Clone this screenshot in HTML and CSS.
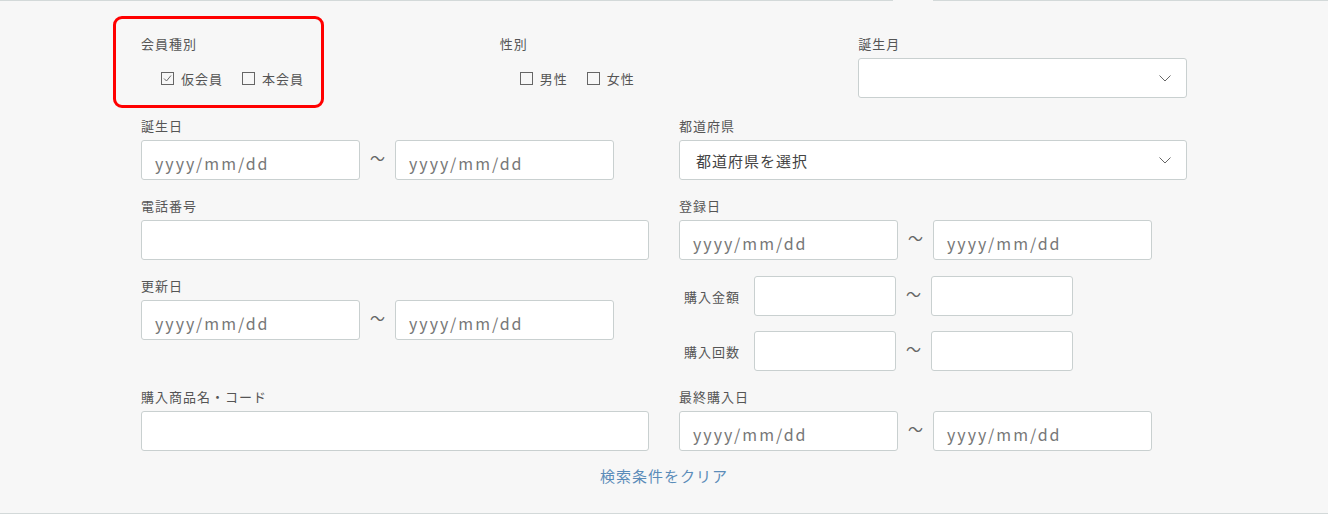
FILE: index.html
```html
<!DOCTYPE html>
<html lang="ja">
<head>
    <meta charset="UTF-8">
    <title>会員検索</title>
    <link rel="stylesheet" href="styles.css">
</head>
<body>
    <div class="panel">
        <span class="tab-notch"></span>
        <div class="search-form">
            <div class="top-row">
                <div class="field highlight">
                    <div class="field-label">会員種別</div>
                    <div class="check-row">
                        <label class="check"><span class="box checked"><svg viewBox="0 0 13 13" width="13" height="13"><path d="M3 6.5 L5.5 9 L10 3.5" fill="none" stroke="#666" stroke-width="1"/></svg></span>仮会員</label>
                        <label class="check"><span class="box"></span>本会員</label>
                    </div>
                    <span class="mark"></span>
                </div>
                <div class="field">
                    <div class="field-label">性別</div>
                    <div class="check-row">
                        <label class="check"><span class="box"></span>男性</label>
                        <label class="check"><span class="box"></span>女性</label>
                    </div>
                </div>
                <div class="field">
                    <div class="field-label">誕生月</div>
                    <div class="select">
                        <span></span>
                        <svg class="chevron" viewBox="0 0 12 7" width="12" height="7"><path d="M0.5 0.5 L6 6 L11.5 0.5" fill="none" stroke="#666" stroke-width="1"/></svg>
                    </div>
                </div>
            </div>

            <div class="main-grid">
                <div class="field">
                    <div class="field-label">誕生日</div>
                    <div class="range">
                        <div class="input date">yyyy/mm/dd</div>
                        <span class="tilde">〜</span>
                        <div class="input date">yyyy/mm/dd</div>
                    </div>
                </div>
                <div class="field">
                    <div class="field-label">都道府県</div>
                    <div class="select">
                        <span>都道府県を選択</span>
                        <svg class="chevron" viewBox="0 0 12 7" width="12" height="7"><path d="M0.5 0.5 L6 6 L11.5 0.5" fill="none" stroke="#666" stroke-width="1"/></svg>
                    </div>
                </div>

                <div class="field">
                    <div class="field-label">電話番号</div>
                    <div class="input"></div>
                </div>
                <div class="field">
                    <div class="field-label">登録日</div>
                    <div class="range">
                        <div class="input date">yyyy/mm/dd</div>
                        <span class="tilde">〜</span>
                        <div class="input date">yyyy/mm/dd</div>
                    </div>
                </div>

                <div class="field">
                    <div class="field-label">更新日</div>
                    <div class="range">
                        <div class="input date">yyyy/mm/dd</div>
                        <span class="tilde">〜</span>
                        <div class="input date">yyyy/mm/dd</div>
                    </div>
                </div>
                <div class="inline-fields">
                    <div class="inline-row">
                        <span class="inline-label">購入金額</span>
                        <div class="input small"></div>
                        <span class="tilde">〜</span>
                        <div class="input small"></div>
                    </div>
                    <div class="inline-row">
                        <span class="inline-label">購入回数</span>
                        <div class="input small"></div>
                        <span class="tilde">〜</span>
                        <div class="input small"></div>
                    </div>
                </div>

                <div class="field">
                    <div class="field-label">購入商品名・コード</div>
                    <div class="input"></div>
                </div>
                <div class="field">
                    <div class="field-label">最終購入日</div>
                    <div class="range">
                        <div class="input date">yyyy/mm/dd</div>
                        <span class="tilde">〜</span>
                        <div class="input date">yyyy/mm/dd</div>
                    </div>
                </div>
            </div>

            <div class="clear-row">
                <a class="clear-link" href="#">検索条件をクリア</a>
            </div>
        </div>
    </div>
</body>
</html>
```

FILE: styles.css
```css
body {
    margin: 0;
    background: #f7f7f7;
    font-family: "Noto Sans CJK JP", "Noto Sans", sans-serif;
    color: #555;
}
.panel {
    position: relative;
    border-top: 1px solid #d3d9d9;
    border-bottom: 1px solid #d3d9d9;
    height: 514px;
    box-sizing: border-box;
}
.tab-notch {
    position: absolute;
    top: -1px;
    left: 893px;
    width: 40px;
    height: 1px;
    background: #f7f7f7;
}
.search-form {
    max-width: 1046px;
    margin: 0 auto;
    padding-top: 33px;
}
.top-row {
    display: grid;
    grid-template-columns: repeat(3, 1fr);
    column-gap: 30px;
    margin-bottom: 18px;
}
.main-grid {
    display: grid;
    grid-template-columns: 1fr 1fr;
    column-gap: 30px;
    row-gap: 16px;
    align-items: start;
}
.field {
    position: relative;
}
.field-label {
    font-size: 13px;
    letter-spacing: 1px;
    line-height: 20px;
    height: 20px;
    margin-bottom: 4px;
    color: #555;
}
.check-row {
    display: flex;
    align-items: center;
    gap: 19px;
    padding-left: 20px;
    height: 40px;
}
.check {
    display: flex;
    align-items: center;
    font-size: 13px;
    letter-spacing: 1px;
    color: #555;
}
.box {
    display: inline-block;
    width: 11px;
    height: 11px;
    border: 1px solid #666;
    margin-right: 7px;
    background: transparent;
    position: relative;
}
.box svg {
    position: absolute;
    left: -1px;
    top: -1px;
}
.mark {
    position: absolute;
    left: -28px;
    top: -18px;
    width: 205px;
    height: 86px;
    border: 3px solid #ff0000;
    border-radius: 9px;
}
.input {
    height: 40px;
    box-sizing: border-box;
    background: #fff;
    border: 1px solid #c9d0d0;
    border-radius: 3px;
}
.input.date {
    width: 219px;
    padding: 7px 13px 0;
    font-size: 16px;
    letter-spacing: 2px;
    line-height: 31px;
    color: #777;
}
.input.small {
    width: 142px;
}
.range {
    display: flex;
    align-items: center;
}
.tilde {
    width: 35px;
    text-align: center;
    font-size: 15px;
    color: #666;
    margin-top: -6px;
}
.select {
    display: flex;
    align-items: center;
    justify-content: space-between;
    height: 40px;
    box-sizing: border-box;
    background: #fff;
    border: 1px solid #c9d0d0;
    border-radius: 3px;
    padding: 0 15px 0 16px;
    font-size: 15px;
    letter-spacing: 1px;
    color: #444;
}
.chevron {
    display: block;
}
.inline-fields {
    display: flex;
    flex-direction: column;
    gap: 15px;
}
.inline-row {
    display: flex;
    align-items: center;
}
.inline-label {
    width: 75px;
    padding-left: 5px;
    box-sizing: border-box;
    font-size: 13px;
    letter-spacing: 1px;
    color: #555;
}
.clear-row {
    text-align: center;
    margin-top: 14px;
    line-height: 20px;
}
.clear-link {
    font-size: 15px;
    letter-spacing: 1px;
    color: #5b8cb9;
    text-decoration: none;
}
```
